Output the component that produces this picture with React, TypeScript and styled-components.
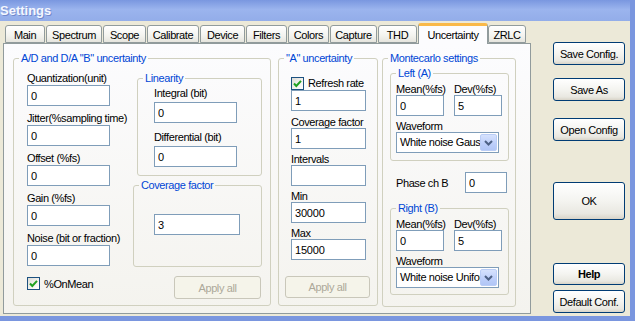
import React from "react";
import styled, { createGlobalStyle } from "styled-components";

const GlobalStyle = createGlobalStyle`
  html, body {
    margin: 0;
    padding: 0;
  }
  body {
    font-family: "Liberation Sans", Arial, sans-serif;
    font-size: 11px;
    letter-spacing: -0.4px;
    color: #000;
  }
  * {
    box-sizing: border-box;
  }
`;

const Window = styled.div`
  width: 635px;
  height: 321px;
  display: flex;
  flex-direction: column;
  background: #ece9d8;
  border-right: 5px solid #7a96df;
  overflow: hidden;
`;

const TitleBar = styled.div`
  height: 21px;
  flex: none;
  background: linear-gradient(180deg, #7a97e0 0%, #9bb4ee 45%, #93ade9 100%);
  color: #f4f7ff;
  font-weight: bold;
  font-size: 13px;
  letter-spacing: 0;
  line-height: 21px;
  padding-left: 0;
  text-shadow: 1px 1px 0 rgba(40, 60, 140, 0.35);
`;

const Body = styled.div`
  flex: 1;
  display: flex;
  border-bottom: 5px solid #7a96df;
`;

const TabArea = styled.div`
  width: 528px;
  margin-left: 3px;
  margin-top: 2px;
  display: flex;
  flex-direction: column;
`;

const TabStrip = styled.div`
  height: 20px;
  display: flex;
  align-items: flex-end;
  gap: 1px;
  padding-left: 2px;
`;

const Tab = styled.div<{ $w: number; $active?: boolean }>`
  width: ${(p) => p.$w}px;
  height: ${(p) => (p.$active ? 21 : 18)}px;
  margin-bottom: ${(p) => (p.$active ? -1 : 0)}px;
  margin-right: ${(p) => (p.$active ? -1 : 0)}px;
  position: relative;
  z-index: ${(p) => (p.$active ? 2 : 0)};
  border: 1px solid #919b9c;
  border-bottom: ${(p) => (p.$active ? "none" : "1px solid #919b9c")};
  border-top: ${(p) => (p.$active ? "3px solid #f9b949" : "1px solid #919b9c")};
  border-radius: 3px 3px 0 0;
  background: ${(p) =>
    p.$active ? "#fcfcfe" : "linear-gradient(180deg, #ffffff 0%, #f3f3ef 60%, #e6e5de 100%)"};
  display: flex;
  align-items: center;
  justify-content: center;
  font-size: 11px;
  padding-top: ${(p) => (p.$active ? 0 : 1)}px;
  white-space: nowrap;
`;

const Panel = styled.div`
  height: 271px;
  border: 1px solid #919b9c;
  background: linear-gradient(180deg, #fcfcfe 0%, #f4f3ee 100%);
  padding: 7px 0 0 9px;
  display: flex;
  align-items: flex-start;
`;

const Group = styled.fieldset<{ $w: number; $h: number; $ml?: number; $mt?: number }>`
  width: ${(p) => p.$w}px;
  height: ${(p) => p.$h}px;
  margin: ${(p) => p.$mt ?? 0}px 0 0 ${(p) => p.$ml ?? 0}px;
  padding: 0;
  border: 1px solid #d0d0bf;
  border-radius: 3px;
  flex: none;
  min-width: 0;
`;

const Legend = styled.legend`
  margin-left: 5px;
  padding: 0 2px;
  line-height: 14px;
  height: 14px;
  color: #0046d5;
  font-size: 11px;
`;

const Inner = styled.div<{ $pl: number; $pt: number }>`
  padding: ${(p) => p.$pt}px 0 0 ${(p) => p.$pl}px;
`;

const Row = styled.div`
  display: flex;
  align-items: flex-start;
`;

const Column = styled.div<{ $w: number }>`
  width: ${(p) => p.$w}px;
  display: flex;
  flex-direction: column;
  align-items: flex-start;
`;

const Label = styled.div<{ $lh?: number; $mt?: number }>`
  line-height: ${(p) => p.$lh ?? 14}px;
  height: ${(p) => p.$lh ?? 14}px;
  margin-top: ${(p) => p.$mt ?? 0}px;
  white-space: nowrap;
`;

const TextBox = styled.input<{ $w: number; $mt?: number; $mb?: number }>`
  width: ${(p) => p.$w}px;
  height: 21px;
  margin: ${(p) => p.$mt ?? 0}px 0 ${(p) => p.$mb ?? 0}px 0;
  border: 1px solid #7f9db9;
  background: #fff;
  padding: 0 0 0 3px;
  font-family: "Liberation Sans", Arial, sans-serif;
  font-size: 11px;
  letter-spacing: -0.2px;
  color: #000;
  outline: none;
`;

const CheckRow = styled.div<{ $mt?: number; $h?: number }>`
  display: flex;
  align-items: center;
  gap: 4px;
  height: ${(p) => p.$h ?? 14}px;
  margin-top: ${(p) => p.$mt ?? 0}px;
`;

const CheckBox = styled.div`
  width: 13px;
  height: 13px;
  border: 1px solid #1c5180;
  background: linear-gradient(135deg, #dcdcd7 0%, #f5f4f0 60%, #ffffff 100%);
  display: flex;
  align-items: center;
  justify-content: center;
`;

const Button = styled.div<{
  $w: number;
  $h: number;
  $mt?: number;
  $ml?: number;
  $disabled?: boolean;
  $bold?: boolean;
}>`
  width: ${(p) => p.$w}px;
  height: ${(p) => p.$h}px;
  margin-top: ${(p) => p.$mt ?? 0}px;
  margin-left: ${(p) => p.$ml ?? 0}px;
  border: 1px solid ${(p) => (p.$disabled ? "#c9c7ba" : "#003c74")};
  border-radius: 3px;
  background: ${(p) =>
    p.$disabled
      ? "#f5f4ea"
      : "linear-gradient(180deg, #ffffff 0%, #f4f4f0 50%, #e9e8e1 85%, #d8d4c8 100%)"};
  color: ${(p) => (p.$disabled ? "#aca899" : "#000")};
  font-weight: ${(p) => (p.$bold ? "bold" : "normal")};
  display: flex;
  align-items: center;
  justify-content: center;
  font-size: 11px;
  white-space: nowrap;
  flex: none;
`;

const Combo = styled.div<{ $w: number }>`
  width: ${(p) => p.$w}px;
  height: 21px;
  border: 1px solid #7f9db9;
  background: #fff;
  display: flex;
  align-items: center;
  padding: 1px;
`;

const ComboText = styled.div`
  flex: 1;
  overflow: hidden;
  white-space: nowrap;
  padding-left: 2px;
  line-height: 17px;
`;

const ComboButton = styled.div`
  width: 17px;
  height: 17px;
  flex: none;
  border: 1px solid #bacdf6;
  border-radius: 2px;
  background: linear-gradient(180deg, #d6e2fd 0%, #bccefa 60%, #b1c6f6 100%);
  display: flex;
  align-items: center;
  justify-content: center;
`;

const SideColumn = styled.div`
  width: 72px;
  margin-left: 22px;
  padding-top: 21px;
  display: flex;
  flex-direction: column;
`;

const PhaseRow = styled.div`
  display: flex;
  align-items: center;
  justify-content: space-between;
  width: 111px;
  margin: 11px 0 8px 6px;
`;

const tabs = [
  { name: "Main", w: 40 },
  { name: "Spectrum", w: 56 },
  { name: "Scope", w: 43 },
  { name: "Calibrate", w: 52 },
  { name: "Device", w: 45 },
  { name: "Filters", w: 41 },
  { name: "Colors", w: 41 },
  { name: "Capture", w: 47 },
  { name: "THD", w: 39 },
  { name: "Uncertainty", w: 70, active: true },
  { name: "ZRLC", w: 38 },
];

const bFields = [
  { label: "Quantization(unit)", value: "0" },
  { label: "Jitter(%sampling time)", value: "0" },
  { label: "Offset (%fs)", value: "0" },
  { label: "Gain (%fs)", value: "0" },
  { label: "Noise (bit or fraction)", value: "0" },
];

const aFields = [
  { label: "Coverage factor", value: "1", mt: 5 },
  { label: "Intervals", value: "", mt: 4 },
  { label: "Min", value: "30000", mt: 4 },
  { label: "Max", value: "15000", mt: 4 },
];

const Check = () => (
  <CheckBox>
    <svg width="9" height="9" viewBox="0 0 9 9">
      <polyline points="1,4.5 3.3,7 8,1.8" fill="none" stroke="#21a121" strokeWidth="2" />
    </svg>
  </CheckBox>
);

const Chevron = () => (
  <svg width="9" height="6" viewBox="0 0 9 6">
    <polyline points="1,1 4.5,4.5 8,1" fill="none" stroke="#4d6185" strokeWidth="2" />
  </svg>
);

const Channel: React.FC<{ title: string; wave: string; mt?: number; h: number }> = ({
  title,
  wave,
  mt,
  h,
}) => (
  <Group $w={119} $h={h} $mt={mt}>
    <Legend>{title}</Legend>
    <Inner $pl={5} $pt={3}>
      <Row style={{ gap: 10 }}>
        <Column $w={48}>
          <Label $lh={12}>Mean(%fs)</Label>
          <TextBox $w={48} readOnly value="0" />
        </Column>
        <Column $w={48}>
          <Label $lh={12}>Dev(%fs)</Label>
          <TextBox $w={48} readOnly value="5" />
        </Column>
      </Row>
      <Label $lh={12} $mt={4}>
        Waveform
      </Label>
      <Combo $w={103}>
        <ComboText>{wave}</ComboText>
        <ComboButton>
          <Chevron />
        </ComboButton>
      </Combo>
    </Inner>
  </Group>
);

export default function App() {
  return (
    <>
      <GlobalStyle />
      <Window>
        <TitleBar>Settings</TitleBar>
        <Body>
          <TabArea>
            <TabStrip>
              {tabs.map((t) => (
                <Tab key={t.name} $w={t.w} $active={t.active}>
                  {t.name}
                </Tab>
              ))}
            </TabStrip>
            <Panel>
              {/* A/D and D/A "B" uncertainty */}
              <Group $w={258} $h={255}>
                <Legend>A/D and D/A "B" uncertainty</Legend>
                <Inner $pl={13} $pt={6}>
                  <Row>
                    <Column $w={106}>
                      {bFields.map((f) => (
                        <React.Fragment key={f.label}>
                          <Label>{f.label}</Label>
                          <TextBox $w={83} $mb={5} readOnly value={f.value} />
                        </React.Fragment>
                      ))}
                      <CheckRow $mt={6} $h={13}>
                        <Check />
                        %OnMean
                      </CheckRow>
                    </Column>
                    <Column $w={128}>
                      <Group $w={125} $h={105} $ml={4}>
                        <Legend>Linearity</Legend>
                        <Inner $pl={16} $pt={1}>
                          <Label>Integral (bit)</Label>
                          <TextBox $w={83} $mt={2} readOnly value="0" />
                          <Label $mt={7}>Differential (bit)</Label>
                          <TextBox $w={83} $mt={2} readOnly value="0" />
                        </Inner>
                      </Group>
                      <Group $w={129} $h={89} $mt={2}>
                        <Legend>Coverage factor</Legend>
                        <Inner $pl={20} $pt={22}>
                          <TextBox $w={86} readOnly value="3" />
                        </Inner>
                      </Group>
                      <Button $w={87} $h={23} $mt={9} $ml={41} $disabled>
                        Apply all
                      </Button>
                    </Column>
                  </Row>
                </Inner>
              </Group>

              {/* "A" uncertainty */}
              <Group $w={100} $h={255} $ml={7}>
                <Legend>"A" uncertainty</Legend>
                <Inner $pl={6} $pt={11}>
                  <Column $w={90} style={{ paddingLeft: 6 }}>
                    <CheckRow>
                      <Check />
                      Refresh rate
                    </CheckRow>
                    <TextBox $w={75} readOnly value="1" />
                    {aFields.map((f) => (
                      <React.Fragment key={f.label}>
                        <Label $lh={12} $mt={f.mt}>
                          {f.label}
                        </Label>
                        <TextBox $w={75} readOnly value={f.value} />
                      </React.Fragment>
                    ))}
                  </Column>
                  <Button $w={85} $h={22} $mt={16} $disabled>
                    Apply all
                  </Button>
                </Inner>
              </Group>

              {/* Montecarlo settings */}
              <Group $w={134} $h={256} $ml={4}>
                <Legend>Montecarlo settings</Legend>
                <Inner $pl={7} $pt={1}>
                  <Channel title="Left (A)" wave="White noise Gaussian" h={95} />
                  <PhaseRow>
                    <span>Phase ch B</span>
                    <TextBox $w={42} readOnly value="0" />
                  </PhaseRow>
                  <Channel title="Right (B)" wave="White noise Uniform" h={94} />
                </Inner>
              </Group>
            </Panel>
          </TabArea>

          <SideColumn>
            <Button $w={72} $h={23}>
              Save Config.
            </Button>
            <Button $w={72} $h={23} $mt={13}>
              Save As
            </Button>
            <Button $w={72} $h={23} $mt={17}>
              Open Config
            </Button>
            <Button $w={72} $h={38} $mt={41}>
              OK
            </Button>
            <Button $w={72} $h={22} $mt={43} $bold>
              Help
            </Button>
            <Button $w={72} $h={23} $mt={5}>
              Default Conf.
            </Button>
          </SideColumn>
        </Body>
      </Window>
    </>
  );
}
